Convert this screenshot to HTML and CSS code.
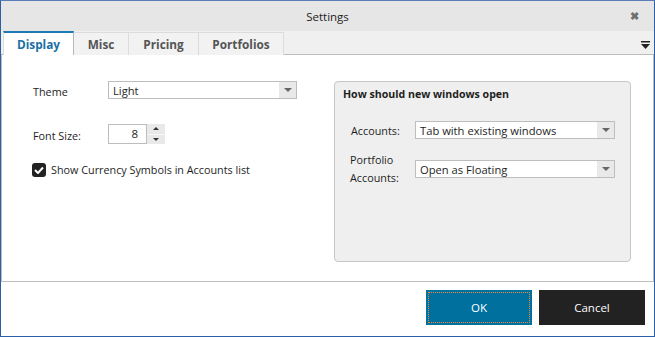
FILE: index.html
```html
<!DOCTYPE html>
<html lang="en">
<head>
  <meta charset="UTF-8" />
  <title>Settings</title>
  <link rel="stylesheet" href="styles.css">
</head>
<body>
  <div class="window">
    <div class="titlebar">
      <span></span>
      <span class="title">Settings</span>
      <button class="close-btn" aria-label="Close">&#10006;</button>
    </div>

    <div class="tabstrip">
      <div class="tab active">Display</div>
      <div class="tab">Misc</div>
      <div class="tab">Pricing</div>
      <div class="tab">Portfolios</div>
      <div class="tab-menu">
        <svg width="9" height="8" viewBox="0 0 9 8"><rect x="0" y="0" width="9" height="1.5" fill="#222"/><path d="M0 3 H9 L4.5 8 Z" fill="#222"/></svg>
      </div>
    </div>

    <div class="content">
      <div class="left-panel">
        <div class="form-row">
          <label class="field-label">Theme</label>
          <div class="select theme-select">
            <span class="select-value">Light</span>
            <span class="select-arrow"></span>
          </div>
        </div>

        <div class="form-row font-row">
          <label class="field-label">Font Size:</label>
          <div class="spinner">
            <span class="spinner-value">8</span>
            <div class="spinner-btns">
              <span class="spin up"></span>
              <span class="spin down"></span>
            </div>
          </div>
        </div>

        <div class="check-row">
          <span class="checkbox">
            <svg width="10" height="8" viewBox="0 0 10 8"><path d="M1 4 L4 7 L9 1.5" stroke="#fff" stroke-width="2" fill="none"/></svg>
          </span>
          <span>Show Currency Symbols in Accounts list</span>
        </div>
      </div>

      <div class="group">
        <div class="group-title">How should new windows open</div>
        <div class="group-grid">
          <label class="group-label">Accounts:</label>
          <div class="select">
            <span class="select-value">Tab with existing windows</span>
            <span class="select-arrow"></span>
          </div>

          <label class="group-label two-line">Portfolio<br>Accounts:</label>
          <div class="select">
            <span class="select-value">Open as Floating</span>
            <span class="select-arrow"></span>
          </div>
        </div>
      </div>
    </div>

    <div class="footer">
      <button class="btn btn-ok">OK</button>
      <button class="btn btn-cancel">Cancel</button>
    </div>
  </div>
</body>
</html>
```

FILE: styles.css
```css
/* Reset */
* {
  box-sizing: border-box;
  margin: 0;
  padding: 0;
}

body {
  font-family: 'Open Sans', 'Noto Sans', sans-serif;
  font-size: 10.8px;
  color: #1e1e1e;
  background: #fff;
}

.window {
  width: 655px;
  height: 337px;
  border: 1px solid #2b5fa8;
  border-top-color: #5a7fb8;
  display: flex;
  flex-direction: column;
  background: #fff;
}

/* Title bar */
.titlebar {
  height: 30px;
  background: #e6e6e6;
  display: grid;
  grid-template-columns: 1fr auto 1fr;
  align-items: center;
}

.title {
  font-size: 11.5px;
  color: #222;
}

.close-btn {
  justify-self: end;
  margin-right: 15px;
  background: none;
  border: none;
  color: #707070;
  font-size: 11px;
  font-weight: bold;
  cursor: pointer;
}

/* Tabs */
.tabstrip {
  height: 24px;
  background: #f0f0f0;
  display: flex;
  align-items: flex-end;
  padding-left: 2px;
  border-bottom: 1px solid #bcbcbc;
}

.tab {
  height: 23px;
  display: flex;
  align-items: center;
  justify-content: center;
  background: #f2f2f2;
  border: 1px solid #dcdcdc;
  border-bottom: none;
  border-left: none;
  font-size: 11.8px;
  font-weight: bold;
  color: #555;
  margin-bottom: -1px;
}

.tab:nth-child(1) { width: 71px; }
.tab:nth-child(2) { width: 55px; }
.tab:nth-child(3) { width: 70px; }
.tab:nth-child(4) { width: 85px; }

.tab.active {
  background: #fff;
  color: #1a6fa5;
  border: none;
  border-top: 2px solid #1b79b4;
  height: 24px;
  border-left: 1px solid #dcdcdc;
  border-right: 1px solid #b8b8b8;
}

.tab-menu {
  margin-left: auto;
  margin-right: 4px;
  align-self: center;
  display: flex;
  padding-top: 4px;
}

/* Content */
.content {
  flex: 1;
  display: flex;
  border: 1px solid #bcbcbc;
  border-top: none;
  padding: 26px 0 0 31px;
  gap: 37px;
}

.left-panel {
  width: 264px;
  display: flex;
  flex-direction: column;
}

.form-row {
  display: flex;
  align-items: center;
}

.font-row {
  margin-top: 25px;
}

.field-label {
  width: 75px;
  padding-top: 3px;
}

.select {
  height: 18px;
  border: 1px solid #bdbdbd;
  background: #fff;
  display: flex;
  align-items: center;
  flex: 1;
  font-size: 11.2px;
}

.theme-select {
  flex: none;
  width: 189px;
}

.select-value {
  flex: 1;
  padding-left: 4px;
}

.select-arrow {
  width: 17px;
  height: 100%;
  background: #e9e9e9;
  display: flex;
  align-items: center;
  justify-content: center;
}

.select-arrow::after {
  content: "";
  border-left: 4px solid transparent;
  border-right: 4px solid transparent;
  border-top: 4px solid #666;
}

.spinner {
  display: flex;
  height: 20px;
}

.spinner-value {
  width: 39px;
  border: 1px solid #bdbdbd;
  text-align: right;
  padding-right: 8px;
  font-size: 11.5px;
  line-height: 18px;
}

.spinner-btns {
  width: 18px;
  display: flex;
  flex-direction: column;
  background: #e9e9e9;
}

.spin {
  flex: 1;
  display: flex;
  align-items: center;
  justify-content: center;
}

.spin.up {
  border-bottom: 1px solid #f7f7f7;
}

.spin.up::after {
  content: "";
  border-left: 3px solid transparent;
  border-right: 3px solid transparent;
  border-bottom: 3px solid #333;
}

.spin.down::after {
  content: "";
  border-left: 3px solid transparent;
  border-right: 3px solid transparent;
  border-top: 3px solid #333;
}

.check-row {
  display: flex;
  align-items: center;
  gap: 5px;
  margin-top: 18px;
  margin-left: -1px;
}

.checkbox {
  width: 14px;
  height: 14px;
  background: #222;
  border-radius: 3px;
  display: flex;
  align-items: center;
  justify-content: center;
}

/* Group box */
.group {
  width: 297px;
  height: 181px;
  background: #efefef;
  border: 1px solid #c6c6c6;
  border-radius: 4px;
  padding: 5px 15px 0 8px;
}

.group-title {
  font-weight: bold;
  font-size: 10.6px;
}

.group-grid {
  display: grid;
  grid-template-columns: 64px 1fr;
  row-gap: 12px;
  align-items: center;
  margin-top: 20px;
  padding-left: 8px;
}

.group-label.two-line {
  line-height: 18px;
  margin-left: -1px;
}

/* Footer */
.footer {
  height: 54px;
  display: flex;
  justify-content: flex-end;
  align-items: flex-start;
  gap: 7px;
  padding: 8px 9px 0 0;
}

.btn {
  width: 106px;
  height: 35px;
  border: none;
  color: #fff;
  font-family: inherit;
  font-size: 11.5px;
}

.btn-ok {
  background: #00719e;
  outline: 1px dotted #f08a3c;
  outline-offset: -3px;
}

.btn-cancel {
  background: #222;
}
```
